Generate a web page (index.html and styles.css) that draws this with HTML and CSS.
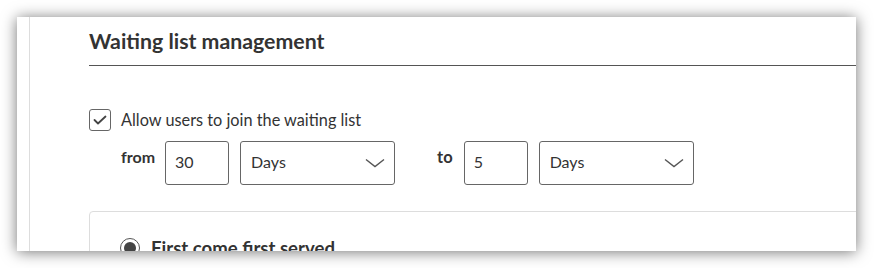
FILE: index.html
```html
<!DOCTYPE html>
<html lang="en">
<head>
    <meta charset="UTF-8">
    <meta name="viewport" content="width=device-width, initial-scale=1.0">
    <title>Waiting list management</title>
    <link rel="stylesheet" href="styles.css">
</head>
<body>
    <div class="window">
        <div class="rail"></div>
        <div class="content">
            <h2>Waiting list management</h2>

            <label class="check-row">
                <span class="checkbox">
                    <svg width="14" height="10" viewBox="0 0 14 10">
                        <path d="M1.5 5 L5 8.5 L12.5 1.5" fill="none" stroke="#444" stroke-width="1.8" stroke-linecap="round" stroke-linejoin="round"/>
                    </svg>
                </span>
                Allow users to join the waiting list
            </label>

            <div class="range-row">
                <span class="range-label">from</span>
                <input type="text" class="num-input" value="30">
                <div class="select">
                    <span>Days</span>
                    <svg width="20" height="10" viewBox="0 0 20 10">
                        <path d="M1 1.5 L10 8.5 L19 1.5" fill="none" stroke="#555" stroke-width="1.4"/>
                    </svg>
                </div>

                <span class="range-label to">to</span>
                <input type="text" class="num-input" value="5">
                <div class="select">
                    <span>Days</span>
                    <svg width="20" height="10" viewBox="0 0 20 10">
                        <path d="M1 1.5 L10 8.5 L19 1.5" fill="none" stroke="#555" stroke-width="1.4"/>
                    </svg>
                </div>
            </div>

            <div class="option-box">
                <label class="radio-row">
                    <span class="radio"><span class="dot"></span></span>
                    First come first served
                </label>
            </div>
        </div>
    </div>
</body>
</html>
```

FILE: styles.css
```css
body {
    margin: 0;
    background-color: #fff;
    font-family: Lato, "Open Sans", sans-serif;
    color: #333;
}

.window {
    margin: 17px;
    width: 839px;
    height: 234px;
    background-color: #fff;
    box-shadow: 0 1px 14px rgba(0, 0, 0, 0.55);
    overflow: hidden;
    display: flex;
}

.rail {
    flex: 0 0 12px;
    border-right: 1px solid #ddd;
}

.content {
    flex: 0 0 900px;
    padding: 10px 0 0 59px;
}

h2 {
    margin: 0;
    font-size: 21.3px;
    line-height: 28px;
    font-weight: 700;
    color: #333;
    padding-bottom: 10px;
    border-bottom: 1px solid #555;
}

.check-row {
    display: flex;
    align-items: center;
    margin-top: 43px;
    font-size: 16.3px;
    line-height: 20px;
}

.checkbox {
    width: 20px;
    height: 20px;
    border: 1px solid #666;
    border-radius: 3px;
    display: flex;
    align-items: center;
    justify-content: center;
    margin-right: 10px;
}

.range-row {
    display: flex;
    align-items: flex-start;
    margin-top: 10px;
    padding-left: 32px;
}

.range-label {
    font-size: 16px;
    line-height: 20px;
    font-weight: 700;
    padding-top: 6px;
    margin-right: 10px;
}

.range-label.to {
    margin-left: 42px;
    margin-right: 11px;
    font-size: 16.5px;
}

.num-input {
    width: 64px;
    height: 44px;
    box-sizing: border-box;
    border: 1px solid #666;
    border-radius: 3px;
    padding: 0 9px 4px;
    font-family: Lato, sans-serif;
    font-size: 16px;
    color: #333;
    margin: 0;
}

.select {
    width: 155px;
    height: 44px;
    box-sizing: border-box;
    border: 1px solid #666;
    border-radius: 3px;
    margin-left: 11px;
    padding: 0 9px 3px 10px;
    display: flex;
    align-items: center;
    justify-content: space-between;
    font-size: 16px;
}

.select svg {
    margin-top: 3px;
}

.option-box {
    margin-top: 26px;
    border: 1px solid #ddd;
    border-radius: 4px;
    padding: 25px 30px;
}

.radio-row {
    display: flex;
    align-items: center;
    font-size: 18.6px;
    font-weight: 700;
    line-height: 22px;
}

.radio {
    width: 18px;
    height: 18px;
    border: 1px solid #555;
    border-radius: 50%;
    display: flex;
    align-items: center;
    justify-content: center;
    margin-right: 11px;
}

.dot {
    width: 12px;
    height: 12px;
    border-radius: 50%;
    background-color: #444;
}
```
